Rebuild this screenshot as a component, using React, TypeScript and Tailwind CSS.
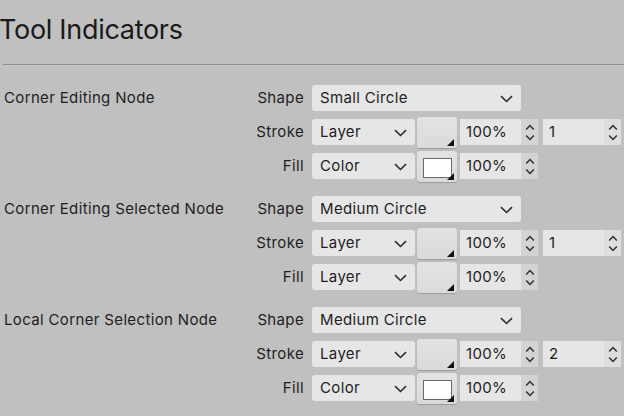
import React from "react";

type Paint = { kind: string; color?: boolean };

type Indicator = {
  name: string;
  shape: string;
  stroke: Paint;
  fill: Paint;
  width: string;
};

const indicators: Indicator[] = [
  { name: "Corner Editing Node", shape: "Small Circle", stroke: { kind: "Layer" }, fill: { kind: "Color", color: true }, width: "1" },
  { name: "Corner Editing Selected Node", shape: "Medium Circle", stroke: { kind: "Layer" }, fill: { kind: "Layer" }, width: "1" },
  { name: "Local Corner Selection Node", shape: "Medium Circle", stroke: { kind: "Layer" }, fill: { kind: "Color", color: true }, width: "2" },
];

function Chevron() {
  return (
    <svg width="13" height="8" viewBox="0 0 13 8" className="shrink-0">
      <path d="M1 1.2 L6.5 6.5 L12 1.2" fill="none" stroke="#2e2e2e" strokeWidth="1.6" />
    </svg>
  );
}

function StepIcon() {
  return (
    <svg width="10" height="17" viewBox="0 0 10 17">
      <path d="M1.2 5.5 L5 1.6 L8.8 5.5" fill="none" stroke="#2e2e2e" strokeWidth="1.5" />
      <path d="M1.2 11.5 L5 15.4 L8.8 11.5" fill="none" stroke="#2e2e2e" strokeWidth="1.5" />
    </svg>
  );
}

function Select({ value, w }: { value: string; w: string }) {
  return (
    <div className={`${w} h-[26px] rounded-[3px] bg-[#e6e6e6] flex items-center justify-between pl-2 pr-[8px] pt-px text-[#1e1e1e]`}>
      <span>{value}</span>
      <Chevron />
    </div>
  );
}

function Swatch({ color }: { color?: boolean }) {
  return (
    <div className="relative w-[40px] h-[31px] rounded-[3px] bg-gradient-to-b from-[#e3e3e3] to-[#dadada] shadow-[0_0.5px_1px_rgba(0,0,0,0.2)] shrink-0">
      {color && (
        <div className="absolute left-[6px] top-[7px] w-[29px] h-[20px] bg-white border border-[#6a6a6a]" />
      )}
      <svg width="7" height="7" viewBox="0 0 7 7" className="absolute right-[3px] bottom-[2px]">
        <path d="M7 0 L7 7 L0 7 Z" fill="#111" />
      </svg>
    </div>
  );
}

function Stepper({ value, w, dark }: { value: string; w: string; dark?: boolean }) {
  return (
    <div className="flex h-[26px] shrink-0">
      <div className={`${w} bg-[#e6e6e6] flex items-center pl-[6px] pt-px text-[#1e1e1e]`}>{value}</div>
      <div className={`w-[17px] flex items-center justify-center ${dark ? "bg-[#d3d3d3]" : "bg-[#dedede]"}`}>
        <StepIcon />
      </div>
    </div>
  );
}

function Row({ label, children }: { label: string; children: React.ReactNode }) {
  return (
    <div className="flex items-center h-[26px]">
      <div className="w-[56px] text-right text-[#1e1e1e] mr-2 pt-px">{label}</div>
      {children}
    </div>
  );
}

function Section({ item }: { item: Indicator }) {
  return (
    <div className="flex">
      <div className="w-[248px] pl-[4px] h-[26px] pt-px flex items-center text-[#1e1e1e]">{item.name}</div>
      <div className="flex flex-col gap-[8px]">
        <Row label="Shape">
          <Select value={item.shape} w="w-[209px]" />
        </Row>
        <Row label="Stroke">
          <Select value={item.stroke.kind} w="w-[103px]" />
          <div className="ml-[2px]">
            <Swatch color={item.stroke.color} />
          </div>
          <div className="ml-[3px]">
            <Stepper value="100%" w="w-[61px]" dark />
          </div>
          <div className="ml-[5px]">
            <Stepper value={item.width} w="w-[61px]" />
          </div>
        </Row>
        <Row label="Fill">
          <Select value={item.fill.kind} w="w-[103px]" />
          <div className="ml-[2px]">
            <Swatch color={item.fill.color} />
          </div>
          <div className="ml-[3px]">
            <Stepper value="100%" w="w-[61px]" dark />
          </div>
        </Row>
      </div>
    </div>
  );
}

export default function App() {
  return (
    <div className="w-[624px] h-[416px] overflow-hidden bg-[#c0c0c0] text-[15px] tracking-[0.35px] font-['Inter','Liberation_Sans',sans-serif]">
      <h1 className="pt-[13px] leading-[34px] text-[27px] tracking-[-0.3px] text-[#1a1a1a] -ml-[1px]">Tool Indicators</h1>
      <div className="mt-[17px] ml-[3px] h-px bg-[#8e8e8e] border-b border-[#c9c9c9] box-content" />
      <div className="mt-[19px] flex flex-col gap-[17px]">
        {indicators.map((item) => (
          <Section key={item.name} item={item} />
        ))}
      </div>
    </div>
  );
}
